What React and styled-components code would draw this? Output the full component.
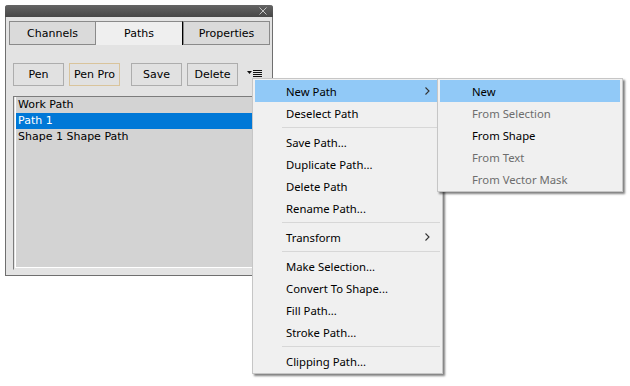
import React from 'react';
import styled, { createGlobalStyle } from 'styled-components';

const GlobalStyle = createGlobalStyle`
  html, body { margin: 0; padding: 0; background: #ffffff; }
`;

const Stage = styled.div`
  position: relative;
  width: 630px;
  height: 386px;
  padding: 5px;
  box-sizing: border-box;
  background: #ffffff;
  overflow: hidden;
`;

const Panel = styled.div`
  width: 268px;
  height: 271px;
  box-sizing: border-box;
  display: flex;
  flex-direction: column;
  background: #e3e3e3;
  border: 1px solid #6f6f6f;
  border-top: none;
  border-radius: 3px 3px 0 0;
  font-family: "DejaVu Sans", Verdana, sans-serif;
  font-size: 11px;
  color: #000;
`;

const TitleBar = styled.div`
  height: 12px;
  margin: 0 -1px;
  display: flex;
  justify-content: flex-end;
  align-items: center;
  padding-right: 6px;
  background: linear-gradient(#646464, #474747);
  border-radius: 3px 3px 0 0;
`;

const PanelBody = styled.div`
  flex: 1;
  display: flex;
  flex-direction: column;
  padding: 4px 2px 5px 3px;
  min-height: 0;
`;

const TabRow = styled.div`
  display: flex;
  height: 24px;
`;

const Tab = styled.div`
  width: ${({ $w }) => $w}px;
  box-sizing: border-box;
  display: flex;
  align-items: center;
  justify-content: center;
  background: ${({ $active }) => ($active ? '#efefef' : '#dadada')};
  border: 1px solid #8a8a8a;
  ${({ $active }) => $active && `
    border-left: none;
    border-bottom: none;
    border-right-color: #000;
  `}
`;

const Toolbar = styled.div`
  display: flex;
  align-items: center;
  margin-top: 18px;
  padding-left: 4px;
  height: 23px;
`;

const ToolButton = styled.div`
  width: 51px;
  height: 23px;
  box-sizing: border-box;
  margin-left: ${({ $gap }) => $gap}px;
  display: flex;
  align-items: center;
  justify-content: center;
  background: #e1e1e1;
  border: 1px solid ${({ $focused }) => ($focused ? '#d9c49c' : '#adadad')};
`;

const MenuTrigger = styled.div`
  margin-left: 9px;
  display: flex;
  align-items: center;
  margin-top: -2px;
`;

const ListBox = styled.div`
  flex: 1;
  margin: 10px 3px 0 4px;
  border: 1px solid;
  border-color: #7c7c7c #e3e3e3 #e3e3e3 #7c7c7c;
  padding: 0 1px 1px 1px;
  display: flex;
`;

const ListInner = styled.div`
  flex: 1;
  background: #d3d3d3;
  border-left: 1px solid #ffffff;
  border-bottom: 1px solid #ffffff;
`;

const ListRow = styled.div`
  height: 16px;
  line-height: 16px;
  padding-left: 2px;
  background: ${({ $selected }) => ($selected ? '#0078d7' : 'transparent')};
  color: ${({ $selected }) => ($selected ? '#ffffff' : '#000')};
  white-space: nowrap;
`;

const Menu = styled.div`
  position: absolute;
  left: ${({ $left }) => $left}px;
  top: ${({ $top }) => $top}px;
  width: ${({ $width }) => $width}px;
  box-sizing: border-box;
  background: #f0f0f0;
  border: 1px solid #c6c6c6;
  padding: 1px 2px;
  box-shadow: 2px 2px 2px rgba(0, 0, 0, 0.5);
  font-family: "Noto Sans", "Open Sans", sans-serif;
  font-size: 11.3px;
`;

const MenuItem = styled.div`
  height: 22px;
  display: flex;
  align-items: center;
  padding-left: ${({ $indent }) => $indent}px;
  padding-right: 10px;
  background: ${({ $hot }) => ($hot ? '#91c9f7' : 'transparent')};
  color: ${({ $disabled }) => ($disabled ? '#6d6d6d' : '#000')};
  white-space: nowrap;
`;

const Separator = styled.div`
  height: 1px;
  background: #d7d7d7;
  margin: 3px 0 3px 27px;
`;

const ChevronBox = styled.span`
  margin-left: auto;
  display: flex;
`;

const Chevron = () => (
  <ChevronBox>
    <svg width="5" height="8" viewBox="0 0 5 8">
      <polyline points="0.5,0.5 4,4 0.5,7.5" fill="none" stroke="#333" strokeWidth="1.1" />
    </svg>
  </ChevronBox>
);

const tabs = [
  { label: 'Channels', w: 87 },
  { label: 'Paths', w: 87, active: true },
  { label: 'Properties', w: 87 },
];

const buttons = [
  { label: 'Pen', gap: 0 },
  { label: 'Pen Pro', gap: 5, focused: true },
  { label: 'Save', gap: 11 },
  { label: 'Delete', gap: 5 },
];

const rows = ['Work Path', 'Path 1', 'Shape 1 Shape Path'];

const menuGroups = [
  [{ label: 'New Path', hot: true, sub: true }, { label: 'Deselect Path' }],
  [
    { label: 'Save Path...' },
    { label: 'Duplicate Path...' },
    { label: 'Delete Path' },
    { label: 'Rename Path...' },
  ],
  [{ label: 'Transform', sub: true }],
  [
    { label: 'Make Selection...' },
    { label: 'Convert To Shape...' },
    { label: 'Fill Path...' },
    { label: 'Stroke Path...' },
  ],
  [{ label: 'Clipping Path...' }],
];

const subItems = [
  { label: 'New', hot: true },
  { label: 'From Selection', disabled: true },
  { label: 'From Shape' },
  { label: 'From Text', disabled: true },
  { label: 'From Vector Mask', disabled: true },
];

export default function App() {
  return (
    <Stage>
      <GlobalStyle />
      <Panel>
        <TitleBar>
          <svg width="8" height="8" viewBox="0 0 8 8">
            <path d="M0.5 0.5 L7.5 7.5 M7.5 0.5 L0.5 7.5" stroke="#c4c4c4" strokeWidth="1" />
          </svg>
        </TitleBar>
        <PanelBody>
          <TabRow>
            {tabs.map((t) => (
              <Tab key={t.label} $w={t.w} $active={t.active}>
                {t.label}
              </Tab>
            ))}
          </TabRow>
          <Toolbar>
            {buttons.map((b) => (
              <ToolButton key={b.label} $gap={b.gap} $focused={b.focused}>
                {b.label}
              </ToolButton>
            ))}
            <MenuTrigger>
              <svg width="16" height="9" viewBox="0 0 16 9">
                <polygon points="0,2 5,2 2.5,5" fill="#111" />
                <path d="M6 1.5 H15 M6 3.5 H15 M6 5.5 H15 M6 7.5 H15" stroke="#111" strokeWidth="1" />
              </svg>
            </MenuTrigger>
          </Toolbar>
          <ListBox>
            <ListInner>
              {rows.map((r) => (
                <ListRow key={r} $selected={r === 'Path 1'}>
                  {r}
                </ListRow>
              ))}
            </ListInner>
          </ListBox>
        </PanelBody>
      </Panel>

      <Menu $left={252} $top={78} $width={191}>
        {menuGroups.map((group, gi) => (
          <React.Fragment key={gi}>
            {gi > 0 && <Separator />}
            {group.map((item) => (
              <MenuItem key={item.label} $indent={31} $hot={item.hot}>
                {item.label}
                {item.sub && <Chevron />}
              </MenuItem>
            ))}
          </React.Fragment>
        ))}
      </Menu>

      <Menu $left={437} $top={78} $width={186}>
        {subItems.map((item) => (
          <MenuItem key={item.label} $indent={32} $hot={item.hot} $disabled={item.disabled}>
            {item.label}
          </MenuItem>
        ))}
      </Menu>
    </Stage>
  );
}
